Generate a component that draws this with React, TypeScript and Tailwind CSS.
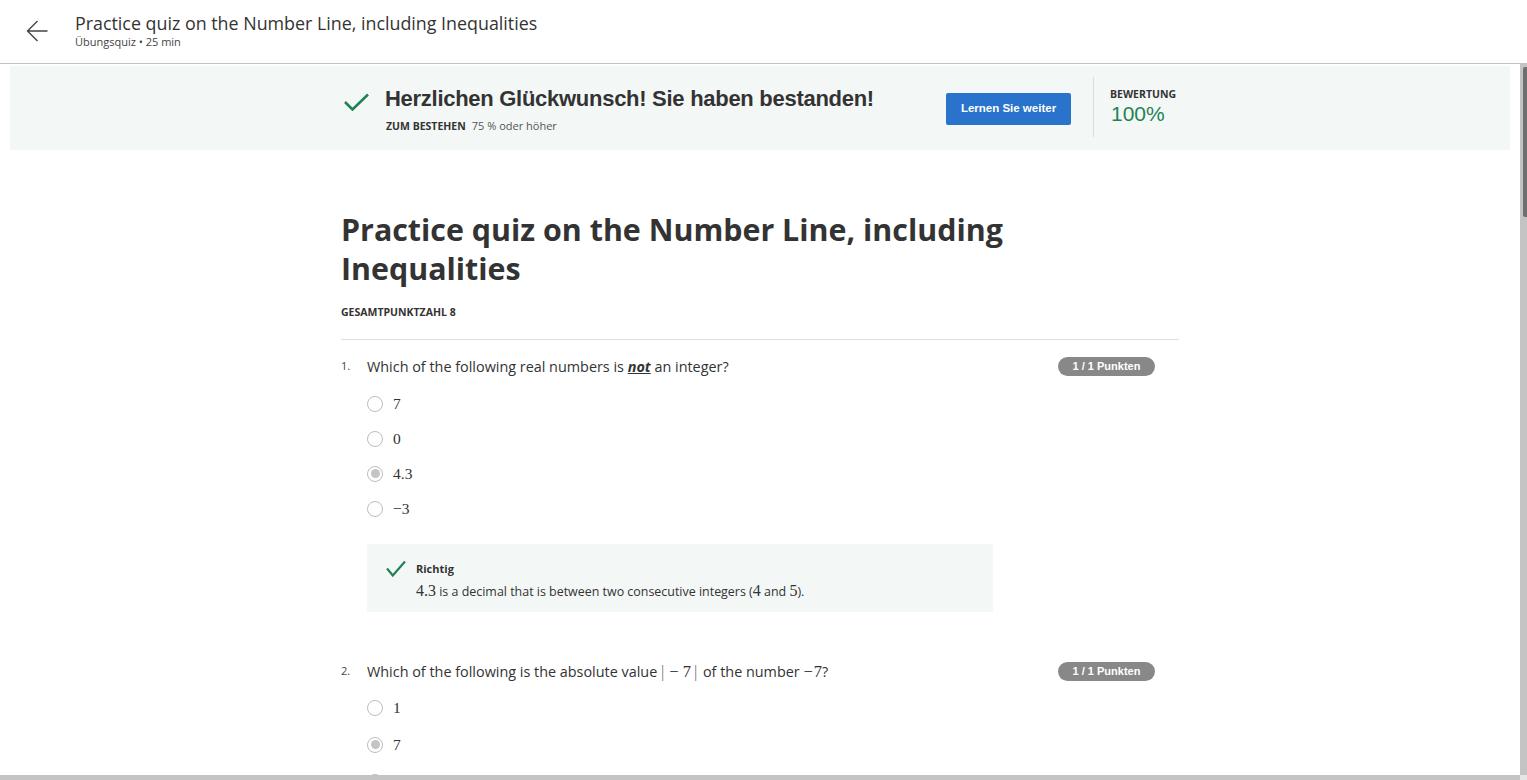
import React from "react";

const sans = { fontFamily: '"Open Sans", "Noto Sans", sans-serif' };
const arial = { fontFamily: '"Liberation Sans", Arial, sans-serif' };
const serif = { fontFamily: '"Liberation Serif", "DejaVu Serif", serif' };

function M({ children }: { children: React.ReactNode }) {
  return (
    <span style={serif} className="text-[16px]">
      {children}
    </span>
  );
}

function Radio({ checked }: { checked?: boolean }) {
  return (
    <span className="w-4 h-4 rounded-full border-[1.5px] border-[#bdbdbd] flex items-center justify-center shrink-0 bg-white">
      {checked && <span className="w-[9px] h-[9px] rounded-full bg-[#c4c4c4]" />}
    </span>
  );
}

function Option({ label, checked, h }: { label: React.ReactNode; checked?: boolean; h: string }) {
  return (
    <div className={`flex items-center gap-[10px] ${h}`}>
      <Radio checked={checked} />
      <span style={serif} className="text-[15.5px] text-[#333]">
        {label}
      </span>
    </div>
  );
}

function Badge() {
  return (
    <span
      style={arial}
      className="mr-6 h-[19px] w-[97px] rounded-full bg-[#888888] text-white text-[11px] font-bold flex items-center justify-center shrink-0"
    >
      1 / 1 Punkten
    </span>
  );
}

function Check({ w, h, sw }: { w: number; h: number; sw: number }) {
  return (
    <svg width={w} height={h} viewBox={`0 0 ${w} ${h}`} fill="none">
      <path
        d={`M1 ${h * 0.5} L${w * 0.34} ${h - 1.5} L${w - 1} 1.5`}
        stroke="#1f8354"
        strokeWidth={sw}
        strokeLinecap="butt"
        strokeLinejoin="miter"
      />
    </svg>
  );
}

export default function App() {
  return (
    <div className="w-[1527px] h-[780px] flex flex-col overflow-hidden bg-white text-[#333]" style={sans}>
      {/* Header */}
      <header className="h-[64px] shrink-0 border-b border-[#c2c2c2] flex items-start">
        <div className="w-[75px] h-full flex items-center pl-[26px] pb-[1px]">
          <svg width="22" height="22" viewBox="0 0 22 22" fill="none">
            <path d="M21.5 11H1.5M11.5 1L1.5 11L11.5 21" stroke="#444" strokeWidth="1.4" />
          </svg>
        </div>
        <div className="pt-[11px] flex flex-col">
          <div className="text-[17.85px] leading-[24px] text-[#333]">
            Practice quiz on the Number Line, including Inequalities
          </div>
          <div className="text-[11px] leading-[14px] text-[#444]">Übungsquiz • 25 min</div>
        </div>
      </header>

      <div className="flex-1 flex min-h-0">
        <div className="flex-1 flex flex-col min-w-0">
          <div className="flex-1 overflow-hidden">
            {/* Banner */}
            <div className="mt-[2px] mx-[10px] h-[84px] bg-[#f3f8f7] flex justify-center">
              <div className="w-[838px] flex items-center">
                <div className="flex-1 flex items-start pl-[3px] pt-[2px]">
                  <div className="pt-[8px] w-[41px]">
                    <Check w={25} h={18} sw={2.6} />
                  </div>
                  <div className="flex flex-col">
                    <div style={arial} className="text-[22px] leading-[28px] font-bold text-[#333] tracking-[-0.28px]">
                      Herzlichen Glückwunsch! Sie haben bestanden!
                    </div>
                    <div className="mt-[5px] flex items-center gap-[6px] leading-[16px] pl-[1px]">
                      <span className="text-[10.5px] font-bold text-[#333]">ZUM BESTEHEN</span>
                      <span className="text-[11px] text-[#555]">75 % oder höher</span>
                    </div>
                  </div>
                </div>
                <button
                  style={arial}
                  className="w-[125px] h-[32px] bg-[#2a73cc] text-white text-[11.5px] font-bold rounded-[2px] mt-[2px]"
                >
                  Lernen Sie weiter
                </button>
                <div className="ml-[22px] w-px h-[60px] bg-[#dcdcdc] mt-[-2px]" />
                <div className="pl-[16px] w-[85px] flex flex-col mt-[-4px]">
                  <span className="text-[10.5px] font-bold leading-[14px] text-[#333]">BEWERTUNG</span>
                  <span style={arial} className="text-[21px] leading-[24px] text-[#1f8354] mt-[1px] pl-[1px]">
                    100%
                  </span>
                </div>
              </div>
            </div>

            {/* Main */}
            <div className="flex justify-center">
              <div className="w-[838px] pt-[61px]">
                <h1 className="text-[30.4px] leading-[38.5px] font-bold text-[#333]">
                  Practice quiz on the Number Line, including
                  <br />
                  Inequalities
                </h1>
                <div className="mt-[16px] text-[10.5px] leading-[16px] font-bold text-[#333]">GESAMTPUNKTZAHL 8</div>
                <div className="mt-[19px] h-px bg-[#dedede]" />

                {/* Q1 */}
                <div className="mt-[16px] flex items-center h-[20px]">
                  <span className="w-[26px] text-[11px] text-[#444] self-start pt-[2px]">1.</span>
                  <span className="flex-1 text-[14.4px] leading-[20px] text-[#333] pt-[1px]">
                    Which of the following real numbers is{" "}
                    <strong className="font-bold italic underline">not</strong> an integer?
                  </span>
                  <Badge />
                </div>
                <div className="pl-[26px] mt-[10px] flex flex-col">
                  <Option h="h-[35px]" label="7" />
                  <Option h="h-[35px]" label="0" />
                  <Option h="h-[35px]" label="4.3" checked />
                  <Option h="h-[35px]" label="−3" />
                </div>
                <div className="ml-[26px] mt-[18px] w-[626px] h-[68px] bg-[#f3f8f7] flex pl-[19px] pt-[16px]">
                  <div className="w-[30px]">
                    <Check w={20} h={17} sw={2.2} />
                  </div>
                  <div className="flex flex-col">
                    <span className="text-[11px] font-bold leading-[16px] text-[#333] pt-[1px]">Richtig</span>
                    <span className="text-[12.45px] leading-[20px] text-[#333] mt-[4px]">
                      <M>4.3</M> is a decimal that is between two consecutive integers (<M>4</M> and <M>5</M>).
                    </span>
                  </div>
                </div>

                {/* Q2 */}
                <div className="mt-[49px] flex items-center h-[20px]">
                  <span className="w-[26px] text-[11px] text-[#444] self-start pt-[2px]">2.</span>
                  <span className="flex-1 text-[14.4px] leading-[20px] text-[#333] pt-[1px]">
                    Which of the following is the absolute value{" "}
                    <span style={serif} className="text-[16.5px]">
                      <span className="text-[#777] font-light">|</span>
                      <span className="ml-[5px] mr-[4px]">−</span>7<span className="text-[#777] font-light ml-[3px] mr-[2px]">|</span>
                    </span>{" "}
                    of the number{" "}
                    <span style={serif} className="text-[16.5px]">
                      <span className="mr-[1px]">−</span>7
                    </span>
                    ?
                  </span>
                  <Badge />
                </div>
                <div className="pl-[26px] mt-[8px] flex flex-col">
                  <Option h="h-[37px]" label="1" />
                  <Option h="h-[37px]" label="7" checked />
                  <Option h="h-[37px]" label="−7" />
                </div>
              </div>
            </div>
          </div>
          <div className="h-[5px] shrink-0 bg-[#c4c4c4]" />
        </div>
        {/* Vertical scrollbar */}
        <div className="w-[7px] shrink-0 flex flex-col bg-[#c4c4c4]">
          <div className="flex-1">
            <div className="mt-[3px] ml-[3px] w-[4px] h-[150px] rounded-l-[2px] bg-[#6f6f6f]" />
          </div>
          <div className="h-[5px] bg-[#e6e6e6]" />
        </div>
      </div>
    </div>
  );
}
